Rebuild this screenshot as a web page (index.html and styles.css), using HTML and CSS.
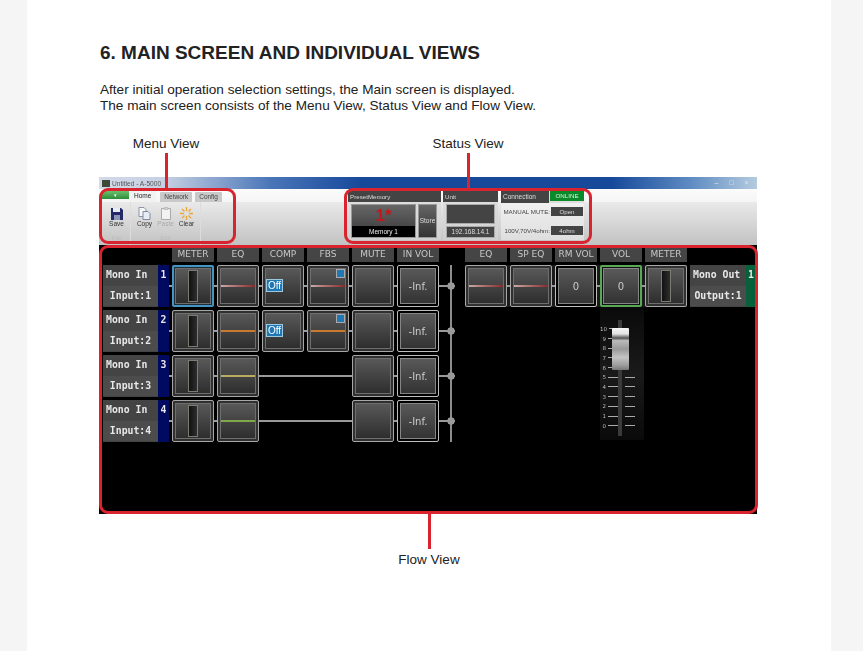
FILE: index.html
```html
<!DOCTYPE html>
<html lang="en">
<head>
    <meta charset="UTF-8">
    <meta name="viewport" content="width=device-width, initial-scale=1.0">
    <title>Main Screen and Individual Views</title>
    <link rel="stylesheet" href="styles.css">
</head>
<body>
<div class="page">
    <h1>6. MAIN SCREEN AND INDIVIDUAL VIEWS</h1>
    <p class="intro">After initial operation selection settings, the Main screen is displayed.<br>The main screen consists of the Menu View, Status View and Flow View.</p>

    <div class="figure">
        <div class="app">
            <div class="titlebar">
                <span class="app-icon"></span>
                <span class="app-title">Untitled - A-5000</span>
                <span class="win-btns"><i>&#8211;</i><i>&#9633;</i><i>&#215;</i></span>
            </div>

            <div class="ribbon">
                <div class="menu-part">
                    <div class="tabs">
                        <span class="file-tab">&#9662;</span>
                        <span class="tab active">Home</span>
                        <span class="tab">Network</span>
                        <span class="tab">Config</span>
                    </div>
                    <div class="tools">
                        <div class="tool-group">
                            <div class="tool">
                                <svg width="12" height="13" viewBox="0 0 12 13"><path d="M0 1h10l2 2v10H0z" fill="#232a66"/><path d="M2 1h7v4H2z" fill="#e8ecf4"/><path d="M3 8h6v5H3z" fill="#8f97b8"/></svg>
                                <span>Save</span>
                            </div>
                            <div class="group-name">File</div>
                        </div>
                        <div class="tool-group">
                            <div class="tool-row">
                                <div class="tool">
                                    <svg width="13" height="13" viewBox="0 0 13 13"><path d="M1 .5h5l2 2v7H1z" fill="#f6f6f6" stroke="#8b93a5"/><path d="M5 4.500h5l2 2v6H5z" fill="#e6ebf4" stroke="#7f8aa3"/></svg>
                                    <span>Copy</span>
                                </div>
                                <div class="tool dim">
                                    <svg width="12" height="13" viewBox="0 0 12 13"><path d="M1.500 1.500h9v11h-9z" fill="#f2f2f2" stroke="#aaa"/><path d="M4 .5h4v2H4z" fill="#ccc" stroke="#aaa" stroke-width=".5"/></svg>
                                    <span>Paste</span>
                                </div>
                                <div class="tool">
                                    <svg width="13" height="13" viewBox="0 0 13 13" stroke="#e9a73c" stroke-width="1.300"><path d="M6.500 0v4M6.500 9v4M0 6.500h4M9 6.500h4M2 2l2.500 2.500M8.500 8.500L11 11M11 2L8.500 4.500M4.500 8.500L2 11"/></svg>
                                    <span>Clear</span>
                                </div>
                            </div>
                            <div class="group-name">Edit</div>
                        </div>
                    </div>
                </div>

                <div class="status-part">
                    <div class="panel panel-preset">
                        <div class="panel-head">PresetMemory</div>
                        <div class="panel-body preset-body">
                            <div class="preset-btn">
                                <div class="preset-num">1*</div>
                                <div class="preset-name">Memory 1</div>
                            </div>
                            <div class="store-btn">Store</div>
                        </div>
                    </div>
                    <div class="panel panel-unit">
                        <div class="panel-head">Unit</div>
                        <div class="panel-body unit-body">
                            <div class="unit-box"></div>
                            <div class="unit-ip">192.168.14.1</div>
                        </div>
                    </div>
                    <div class="panel panel-conn">
                        <div class="conn-head">
                            <div class="panel-head">Connection</div>
                            <div class="online">ONLINE</div>
                        </div>
                        <div class="panel-body conn-body">
                            <div class="conn-row"><span>MANUAL MUTE:</span><b>Open</b></div>
                            <div class="conn-row"><span>100V,70V/4ohm:</span><b>4ohm</b></div>
                        </div>
                    </div>
                </div>
            </div>

            <div class="flow">
                <div class="flow-in">
                    <div class="heads">
                        <span>METER</span><span>EQ</span><span>COMP</span><span>FBS</span><span>MUTE</span><span>IN VOL</span>
                    </div>
                    <div class="rows">
                        <div class="row">
                            <div class="ch"><div>Mono In</div><div class="ch-sub">Input:1</div></div>
                            <div class="ch-num">1</div>
                            <div class="cells">
                                <div class="cell sel-blue"><i class="slot"></i></div>
                                <div class="cell"><i class="eq red"></i></div>
                                <div class="cell"><i class="off">Off</i></div>
                                <div class="cell"><i class="eq red"></i><i class="flag"></i></div>
                                <div class="cell"></div>
                                <div class="cell val">-Inf.</div>
                            </div>
                            <i class="dot"></i>
                        </div>
                        <div class="row">
                            <div class="ch"><div>Mono In</div><div class="ch-sub">Input:2</div></div>
                            <div class="ch-num">2</div>
                            <div class="cells">
                                <div class="cell"><i class="slot"></i></div>
                                <div class="cell"><i class="eq orange"></i></div>
                                <div class="cell"><i class="off">Off</i></div>
                                <div class="cell"><i class="eq orange"></i><i class="flag"></i></div>
                                <div class="cell"></div>
                                <div class="cell val">-Inf.</div>
                            </div>
                            <i class="dot"></i>
                        </div>
                        <div class="row">
                            <div class="ch"><div>Mono In</div><div class="ch-sub">Input:3</div></div>
                            <div class="ch-num">3</div>
                            <div class="cells">
                                <div class="cell"><i class="slot"></i></div>
                                <div class="cell"><i class="eq yellow"></i></div>
                                <div class="cell blank"></div>
                                <div class="cell blank"></div>
                                <div class="cell"></div>
                                <div class="cell val">-Inf.</div>
                            </div>
                            <i class="dot"></i>
                        </div>
                        <div class="row">
                            <div class="ch"><div>Mono In</div><div class="ch-sub">Input:4</div></div>
                            <div class="ch-num">4</div>
                            <div class="cells">
                                <div class="cell"><i class="slot"></i></div>
                                <div class="cell"><i class="eq green"></i></div>
                                <div class="cell blank"></div>
                                <div class="cell blank"></div>
                                <div class="cell"></div>
                                <div class="cell val">-Inf.</div>
                            </div>
                            <i class="dot"></i>
                        </div>
                    </div>
                </div>

                <div class="flow-out">
                    <div class="heads">
                        <span>EQ</span><span>SP EQ</span><span>RM VOL</span><span>VOL</span><span>METER</span>
                    </div>
                    <div class="row out-row">
                        <div class="cells">
                            <div class="cell"><i class="eq red"></i></div>
                            <div class="cell"><i class="eq red"></i></div>
                            <div class="cell val">0</div>
                            <div class="cell val sel-green">0</div>
                            <div class="cell"><i class="slot"></i></div>
                        </div>
                        <div class="ch"><div>Mono Out</div><div class="ch-sub">Output:1</div></div>
                        <div class="ch-num out-num">1</div>
                    </div>
                    <div class="fader">
                        <div class="scale">
                            <div>10<i></i></div><div>9<i></i></div><div>8<i></i></div><div>7<i></i></div><div>6<i></i></div><div>5<i></i></div><div>4<i></i></div><div>3<i></i></div><div>2<i></i></div><div>1<i></i></div><div>0<i></i></div>
                        </div>
                        <div class="track"><div class="knob"></div></div>
                        <div class="scale scale-right">
                            <div></div><div></div><div></div><div></div><div></div><div><i></i></div><div><i></i></div><div><i></i></div><div><i></i></div><div><i></i></div><div><i></i></div>
                        </div>
                    </div>
                </div>
            </div>
        </div>

        <!-- callouts over the screenshot -->
        <div class="callout menu-view"><span class="leader"></span><span class="call-label">Menu View</span></div>
        <div class="callout status-view"><span class="leader"></span><span class="call-label">Status View</span></div>
        <div class="callout flow-view"><span class="leader"></span><span class="call-label">Flow View</span></div>
    </div>
</div>
</body>
</html>
```

FILE: styles.css
```css
* {
    box-sizing: border-box;
}
html, body {
    margin: 0;
    height: 100%;
}
body {
    background-color: #f5f5f5;
    font-family: "Liberation Sans", Arial, sans-serif;
    color: #222;
}
.page {
    width: 804px;
    height: 651px;
    margin-left: 27px;
    padding: 42px 0 0 72px;
    background-color: white;
    overflow: hidden;
}
h1 {
    margin: 0 0 0 1px;
    font-size: 19px;
    line-height: 21px;
    font-weight: bold;
}
.intro {
    margin: 19px 0 0 1px;
    font-size: 13.6px;
    line-height: 16px;
}
.figure {
    position: relative;
    width: 658px;
    margin-top: 63px;
}
.app {
    display: flex;
    flex-direction: column;
    height: 337px;
    filter: blur(0.35px);
}

/* title bar */
.titlebar {
    display: flex;
    align-items: center;
    height: 12px;
    padding: 0 6px 0 3px;
    background: linear-gradient(90deg, #d2d9e8 0, #c6d0e3 10%, #4a76b8 26%, #17499b 40%, #17499b 78%, #5f8cc2 90%, #b4cbdf 100%);
}
.app-icon {
    width: 8px;
    height: 7px;
    background-color: #3d4a38;
}
.app-title {
    margin-left: 2px;
    font-size: 6.6px;
    color: #555;
}
.win-btns {
    display: flex;
    gap: 6px;
    margin-left: auto;
}
.win-btns i {
    width: 9px;
    font-size: 7px;
    line-height: 8px;
    font-style: normal;
    text-align: center;
    color: #e4e8ee;
}

/* ribbon */
.ribbon {
    display: flex;
    height: 56px;
    background: linear-gradient(#fbfbfb 0, #f5f5f5 23%, #e9e9e9 24%, #c2c2c2 100%);
}
.menu-part {
    width: 245px;
    flex: none;
}
.tabs {
    display: flex;
    align-items: flex-end;
    height: 13px;
    padding-left: 3px;
}
.file-tab {
    width: 27px;
    height: 8px;
    margin-bottom: 3px;
    font-size: 5px;
    line-height: 8px;
    text-align: center;
    color: #fff;
    background: linear-gradient(#6cc06c, #2d8d3a);
}
.tab {
    height: 10px;
    margin-right: 3px;
    padding: 0 4px;
    font-size: 6.5px;
    line-height: 10px;
    color: #444;
    background-color: #c9c9c9;
    border-radius: 1px 1px 0 0;
}
.tab.active {
    height: 13px;
    margin-right: 4px;
    padding: 0 5px;
    line-height: 13px;
    color: #222;
    background-color: #f2f2f2;
}
.tools {
    display: flex;
    height: 43px;
    padding-left: 4px;
}
.tool-group {
    display: flex;
    flex-direction: column;
    justify-content: space-between;
    padding: 5px 3px 4px;
    border-right: 1px solid #dcdcdc;
}
.tool-row {
    display: flex;
}
.tool {
    display: flex;
    flex-direction: column;
    align-items: center;
    width: 21px;
    font-size: 6.5px;
    line-height: 7px;
    color: #333;
}
.tool.dim {
    color: #aaa;
}
.group-name {
    font-size: 6px;
    line-height: 6px;
    text-align: center;
    color: #bbb;
}

/* status panels */
.status-part {
    display: flex;
    gap: 2px;
    padding: 2px 0 0 4px;
}
.panel {
    display: flex;
    flex-direction: column;
    height: 49px;
    background: linear-gradient(#e2e2e2, #cfcfcf);
}
.panel-preset {
    width: 93px;
}
.panel-unit {
    width: 55px;
}
.panel-conn {
    width: 83px;
    margin-left: 1px;
}
.panel-head {
    height: 12px;
    padding-left: 2px;
    font-size: 6.2px;
    line-height: 11px;
    color: #ddd;
    background-color: #444;
}
.panel-body {
    flex: 1;
}
.preset-body {
    display: flex;
    gap: 2px;
    padding: 2px 4px 2px 3px;
}
.preset-btn {
    display: flex;
    flex-direction: column;
    width: 65px;
    border: 1px solid #999;
    background: linear-gradient(#666, #383838);
}
.preset-num {
    flex: 1;
    font-size: 17px;
    line-height: 21px;
    font-weight: bold;
    text-align: center;
    color: #c6161c;
}
.preset-name {
    height: 11px;
    font-size: 6.5px;
    line-height: 11px;
    text-align: center;
    color: #eee;
    background-color: #000;
}
.store-btn {
    flex: 1;
    font-size: 6.5px;
    line-height: 32px;
    text-align: center;
    color: #ddd;
    border: 1px solid #999;
    background: linear-gradient(#666, #333);
}
.unit-body {
    display: flex;
    flex-direction: column;
    gap: 2px;
    padding: 2px 3px;
}
.unit-box {
    height: 20px;
    border: 1px solid #aaa;
    background-color: #444;
}
.unit-ip {
    flex: 1;
    font-size: 6.5px;
    line-height: 10px;
    text-align: center;
    color: #ddd;
    border: 1px solid #aaa;
    background-color: #444;
}
.conn-head {
    display: flex;
    gap: 1px;
}
.conn-head .panel-head {
    flex: 1;
    font-size: 6.5px;
}
.online {
    width: 34px;
    height: 10px;
    font-size: 6.2px;
    line-height: 10px;
    text-align: center;
    color: #d8f0d8;
    background-color: #0a8a2a;
}
.conn-body {
    display: flex;
    flex-direction: column;
    gap: 10px;
    padding: 4px 0 0;
    background: linear-gradient(#f0f0f0, #dedede);
}
.conn-row {
    display: flex;
    align-items: center;
    justify-content: flex-end;
    gap: 1px;
    padding-right: 1px;
    font-size: 6.2px;
    color: #444;
    white-space: nowrap;
}
.conn-row b {
    flex: none;
    width: 32px;
    height: 9px;
    font-weight: normal;
    line-height: 9px;
    text-align: center;
    color: #ddd;
    background-color: #444;
}

/* flow view */
.flow {
    display: flex;
    flex: 1;
    padding: 2px 2px 0 4px;
    background-color: #000;
    font-family: "DejaVu Sans", sans-serif;
}
.flow-in {
    width: 352px;
    flex: none;
}
.flow-out {
    flex: 1;
    margin-left: 10px;
}
.heads {
    display: flex;
    gap: 3px;
    height: 15px;
    margin-left: 69px;
}
.flow-out .heads {
    margin-left: 0;
}
.heads span {
    width: 42px;
    font-size: 9px;
    line-height: 15px;
    text-align: center;
    color: #c8c8c8;
    background-color: #454545;
}
.rows {
    display: flex;
    flex-direction: column;
    gap: 3px;
    margin-top: 3px;
    background: linear-gradient(#8d8d8d, #8d8d8d) 347px 0 / 2px 100% no-repeat;
}
.row {
    display: flex;
    align-items: center;
    height: 42px;
}
.ch {
    display: flex;
    flex-direction: column;
    width: 55px;
    height: 42px;
    font-family: "DejaVu Sans Mono", monospace;
    font-size: 9.8px;
    font-weight: bold;
    line-height: 20px;
    color: #e8e8e8;
    background-color: #444;
    text-indent: 3px;
}
.ch-sub {
    margin-top: 1px;
    line-height: 20px;
    text-align: center;
    text-indent: 0;
    background-color: #4c4c4c;
}
.ch-num {
    width: 11px;
    height: 42px;
    padding-top: 3px;
    font-family: "DejaVu Sans Mono", monospace;
    font-size: 9.8px;
    font-weight: bold;
    line-height: 14px;
    text-align: center;
    color: #e8e8e8;
    background-color: #000a60;
}
.cells {
    display: flex;
    gap: 3px;
    padding-left: 3px;
    background: linear-gradient(#999, #999) center / 100% 2px no-repeat;
}
.cell {
    position: relative;
    display: flex;
    align-items: center;
    justify-content: center;
    width: 42px;
    height: 42px;
    border: 1px solid #a6a6a6;
    border-radius: 2px;
    box-shadow: inset 0 0 0 2px #303030;
    outline: 1px solid #6e6e6e;
    outline-offset: -4px;
    font-size: 10px;
    color: #ccc;
    background: linear-gradient(#5c5c5c, #2a2a2a);
}
.cell.blank {
    visibility: hidden;
}
.cell.val {
    border-color: #bdbdbd;
    box-shadow: inset 0 0 0 2px #000;
    outline-color: #858585;
    background: linear-gradient(#5c5c5c, #303030);
}
.cell.sel-blue {
    border: 2px solid #4595c0;
    box-shadow: inset 0 0 0 1px #1c2c38;
}
.cell.sel-green {
    border: 2px solid #58a858;
    box-shadow: inset 0 0 0 1px #111;
}
.slot {
    width: 10px;
    height: 32px;
    border: 1px solid #7d7a70;
    background: linear-gradient(90deg, #111, #2e2e2e);
}
.eq {
    width: 34px;
    height: 2px;
}
.eq.red {
    background: linear-gradient(90deg, #c9a9a6, #8c2a2a);
}
.eq.orange {
    background-color: #c87a2e;
}
.eq.yellow {
    background-color: #b8ac62;
}
.eq.green {
    background-color: #7fa848;
}
.off {
    position: absolute;
    left: 3px;
    top: 13px;
    width: 17px;
    height: 13px;
    font-family: "Liberation Sans", sans-serif;
    font-size: 10px;
    font-style: normal;
    line-height: 12px;
    text-align: center;
    color: #fff;
    border: 1px solid #9cc8e0;
    background-color: #1f77b4;
}
.flag {
    position: absolute;
    top: 3px;
    right: 3px;
    width: 9px;
    height: 9px;
    border: 1px solid #aaa;
    background-color: #1f77b4;
}
/* wire from the last cell to the bus, ending in the junction dot */
.dot {
    width: 16px;
    height: 8px;
    background:
        radial-gradient(circle at 12px 4px, #999 3.5px, transparent 4px),
        linear-gradient(#999, #999) center / 100% 2px no-repeat;
}
.out-row {
    margin-top: 3px;
}
.out-row .cells {
    padding-left: 0;
    background-color: #1a1a1a;
}
.out-row .ch {
    width: 56px;
    margin-left: 3px;
}
.out-num {
    width: 10px;
    color: #eee;
    background-color: #06603a;
}

/* fader */
.fader {
    display: flex;
    width: 44px;
    height: 133px;
    margin-left: 135px;
    padding-top: 17px;
    background: linear-gradient(#0a0a0a, #1a1a1a 50%, #0a0a0a);
}
.scale {
    display: flex;
    flex-direction: column;
    width: 18px;
    font-size: 5.5px;
    color: #bbb;
}
.scale div {
    display: flex;
    align-items: center;
    justify-content: flex-end;
    gap: 2px;
    height: 9.7px;
}
.scale i {
    width: 10px;
    height: 1px;
    background-color: #aaa;
}
.scale-right {
    width: 22px;
    padding-left: 3px;
}
.scale-right div {
    justify-content: flex-start;
}
.track {
    position: relative;
    width: 4px;
    height: 116px;
    margin-top: -4px;
    background-color: #3a3a3a;
}
.knob {
    position: absolute;
    left: -6px;
    top: 8px;
    width: 17px;
    height: 42px;
    border-radius: 1px;
    background: linear-gradient(#f4f4f4 0, #e4e4e4 14%, #555 24%, #bbb 30%, #999 50%, #c4c4c4 70%, #999 90%, #777 100%);
}

/* callouts */
.callout {
    position: absolute;
    border: 3px solid #d9232e;
    border-radius: 9px;
}
.menu-view {
    left: 0;
    top: 11px;
    width: 137px;
    height: 56px;
}
.status-view {
    left: 245px;
    top: 11px;
    width: 248px;
    height: 56px;
}
.flow-view {
    left: 0;
    top: 68px;
    width: 659px;
    height: 269px;
}
.leader {
    position: absolute;
    left: 63px;
    top: -38px;
    width: 3px;
    height: 35px;
    background-color: #d9232e;
}
.status-view .leader {
    left: 120px;
}
.flow-view .leader {
    left: 326px;
    top: auto;
    bottom: -38px;
}
.call-label {
    position: absolute;
    left: 64px;
    top: -55px;
    font-size: 13.5px;
    line-height: 16px;
    white-space: nowrap;
    color: #222;
    transform: translateX(-50%);
}
.status-view .call-label {
    left: 121px;
}
.flow-view .call-label {
    left: 327px;
    top: auto;
    bottom: -57px;
}
```
